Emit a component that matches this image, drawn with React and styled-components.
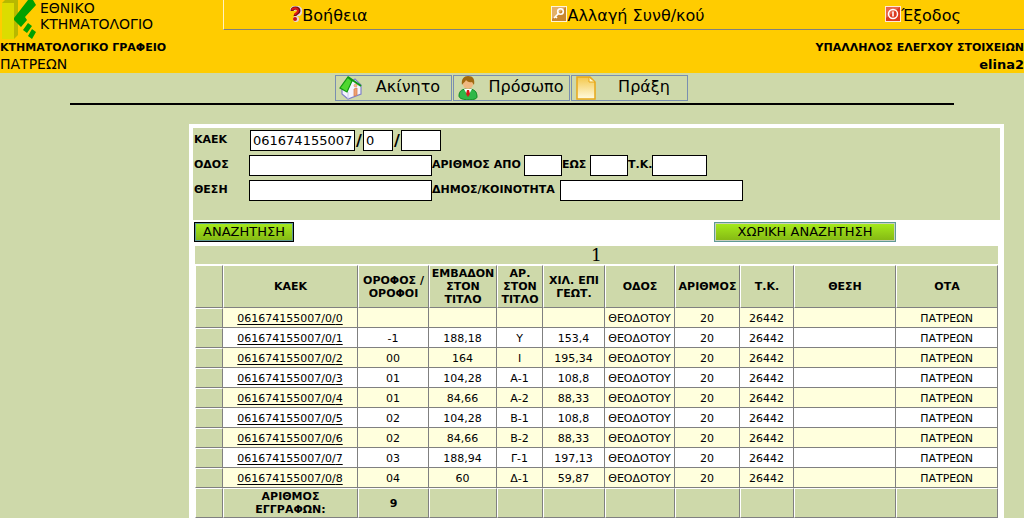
import React, { useState } from 'react'
import styled, { createGlobalStyle, css } from 'styled-components'

const GlobalStyle = createGlobalStyle`
  * {
    box-sizing: border-box;
  }
  html {
    height: 100%;
    overflow: hidden;
  }
  body {
    margin: 0;
    background-color: #ced9aa;
    color: black;
    font-family: 'DejaVu Sans', Verdana, sans-serif;
    font-size: 11px;
  }
`

const Header = styled.header`
  display: flex;
  height: 73px;
  background-color: #ffcc00;
  overflow: hidden;
`

const Brand = styled.div`
  width: 223px;
  flex-shrink: 0;
  white-space: nowrap;
`

const BrandTop = styled.div`
  display: flex;
  gap: 4px;
  height: 40px;
  font-size: 14px;
  line-height: 16px;
`

const Office = styled.div`
  font-size: 11px;
  font-weight: bold;
  line-height: 16px;
`

const City = styled.div`
  font-size: 14px;
  line-height: 17px;
`

const UserName = styled.div`
  font-size: 13px;
  font-weight: bold;
  line-height: 17px;
`

const HeaderMain = styled.div`
  flex: 1;
  display: flex;
  flex-direction: column;
`

const Nav = styled.nav`
  display: grid;
  grid-template-columns: 210fr 388fr 202fr;
  height: 30px;
  border-left: 1px solid #fff2c0;
  border-bottom: 1px solid #808080;
`

const NavLink = styled.a`
  display: flex;
  align-items: center;
  justify-content: center;
  height: 30px;
  color: black;
  font-size: 16px;
  text-decoration: none;
  white-space: nowrap;

  svg {
    margin-bottom: 3px;
  }
`

const UserInfo = styled.div`
  padding-top: 10px;
  text-align: right;
`

const Tabs = styled.nav`
  display: flex;
  justify-content: center;
  gap: 1px;
  padding: 2px 1px 2px 0;
`

const Tab = styled.a`
  display: flex;
  align-items: center;
  width: 117px;
  height: 26px;
  padding-left: 3px;
  border: 1px solid #7a8fb0;
  color: black;
  font-size: 16px;
  line-height: 20px;
  text-decoration: none;
`

const TabText = styled.span`
  flex: 1;
  padding: 0 0 2px 2px;
  text-align: center;
  white-space: nowrap;
`

const Rule = styled.hr`
  height: 2px;
  margin: 0 70px;
  border: none;
  background-color: black;
`

const Panel = styled.main`
  margin: 19px 20px 0 189px;
  border: 4px solid white;
  background-color: white;
`

const SearchForm = styled.form`
  margin: 0;
`

const Fields = styled.div`
  display: flex;
  flex-direction: column;
  gap: 4px;
  height: 92px;
  padding: 2px 1px;
  background-color: #ced9aa;
`

const FieldRow = styled.div`
  display: flex;
  align-items: center;
  height: 21px;
  font-weight: bold;
  white-space: nowrap;
`

const Label = styled.label`
  width: ${(props) => props.$width}px;
  flex-shrink: 0;
  padding-bottom: 2px;
`

const Slash = styled.span`
  width: 8px;
  font-size: 16px;
  text-align: center;
`

const Input = styled.input`
  width: ${(props) => props.$width}px;
  height: 21px;
  padding: 0 2px;
  border: 1px solid black;
  border-radius: 0;
  background-color: white;
  font-family: inherit;
  font-size: 13px;
`

const Actions = styled.div`
  display: flex;
  justify-content: space-between;
  height: 26px;
  padding: 2px 104px 4px 1px;
`

const Button = styled.button`
  width: ${(props) => props.$width}px;
  height: 20px;
  padding: 0;
  border: 1px solid #5f9a94;
  background: linear-gradient(#a6ec1c, #84b714);
  box-shadow: inset 0 0 0 1px #c8d0c0;
  color: black;
  font-family: inherit;
  font-size: 13px;
  line-height: 18px;
  cursor: pointer;
  ${(props) =>
    props.$primary &&
    css`
      border-color: black;
      box-shadow: inset 0 0 0 1px #5f9a94;
    `}
`

const Results = styled.div`
  padding: 0 2px;
`

const Pager = styled.div`
  height: 18px;
  margin-bottom: 1px;
  background-color: #ced9aa;
  font-family: 'DejaVu Serif', serif;
  font-size: 17px;
  line-height: 19px;
  text-align: center;
`

const Table = styled.table`
  width: 100%;
  table-layout: fixed;
  border-collapse: separate;
  border-spacing: 0;
  font-size: 11px;
  text-align: center;
`

const Col = styled.col`
  width: ${(props) => props.$width}px;
`

const HeadCell = styled.th`
  height: ${(props) => props.$height}px;
  padding: 0;
  border: 1px solid white;
  border-right-color: #808080;
  border-bottom-color: #808080;
  background-color: #ced9aa;
  line-height: 13px;
  white-space: pre-line;
`

const Row = styled.tr`
  background-color: ${(props) => (props.$odd ? 'white' : '#ffffdd')};
`

const Cell = styled.td`
  height: 20px;
  padding: 2px 0 0;
  border-right: 1px solid #808080;
  border-bottom: 1px solid #808080;
  line-height: 17px;
  white-space: nowrap;
`

const Link = styled.a`
  color: black;
  text-decoration: underline;
  text-underline-offset: 2px;
`

const Logo = () => (
  <svg width="36" height="40" viewBox="0 0 36 40">
    <path d="M2 3 L5 0 H18 V35 L14 39 H2Z" fill="#b8b800" />
    <rect x="2" y="3" width="12" height="36" fill="#dcdc00" />
    <path d="M28 0 H33 L36 5 L25 17 L27 20 L21 27 L14 20 V18Z" fill="#00a000" />
    <path d="M28 23 L32 26 L27 33 L23 30Z M32 29 L36 32 L32 39 L28 36Z" fill="#00a000" />
  </svg>
)

const HelpIcon = () => (
  <svg width="12" height="16" viewBox="0 0 12 16">
    <path d="M2 5 C2 1 10 1 10 5 C10 8 7 8 7 10" fill="none" stroke="#e8d8d8" strokeWidth="5" />
    <path d="M2 5 C2 1 9 1 9 5 C9 8 5 7 5 10" fill="none" stroke="#6b1010" strokeWidth="3" />
    <path d="M2 4 C3 1 8 2 8 5 C8 7 5 7 5 9" fill="none" stroke="#e01818" strokeWidth="2" />
    <circle cx="6" cy="13" r="3" fill="#e8d8d8" />
    <circle cx="5" cy="13" r="2" fill="#c81414" />
  </svg>
)

const KeyIcon = () => (
  <svg width="16" height="16" viewBox="0 0 16 16">
    <rect width="16" height="16" fill="#fff4d8" />
    <rect x="1" y="1" width="14" height="14" fill="#c9872f" />
    <path d="M1 1 H15 L1 13Z" fill="#e3b069" />
    <circle cx="9.5" cy="5.5" r="2.8" fill="none" stroke="white" strokeWidth="1.6" />
    <path d="M7.5 7.5 L3 12 M4.5 10.5 L6 12" fill="none" stroke="white" strokeWidth="1.6" />
  </svg>
)

const ExitIcon = () => (
  <svg width="16" height="16" viewBox="0 0 16 16">
    <rect width="16" height="16" fill="#ffe8d8" />
    <rect x="1" y="1" width="14" height="14" fill="#dc3c20" />
    <path d="M1 1 H15 L1 12Z" fill="#e8684c" />
    <circle cx="8" cy="8" r="4.5" fill="none" stroke="white" strokeWidth="1.5" />
    <path d="M8 5.5 V10.5" stroke="white" strokeWidth="1.6" />
  </svg>
)

const HouseIcon = () => (
  <svg width="24" height="24" viewBox="0 0 24 24">
    <path d="M3 12 L16 3 L22 9 V18 L9 23 L3 18Z" fill="#f4f4ff" stroke="#8080c8" strokeWidth="1.2" />
    <path d="M9 16 V23" stroke="#c8c8e8" />
    <path d="M15 13 L18 12 V19 L15 20Z" fill="#f0a070" stroke="#d88050" strokeWidth="0.8" />
    <circle cx="16.5" cy="9.5" r="1.5" fill="#f8b890" stroke="#e09060" strokeWidth="0.6" />
    <path d="M9 1 L13 5 L8 16 L1 12Z" fill="#50d830" stroke="#109810" strokeWidth="1.2" />
    <path d="M9 1 L22 10" fill="none" stroke="#109810" strokeWidth="2" />
  </svg>
)

const PersonIcon = () => (
  <svg width="24" height="24" viewBox="0 0 24 24">
    <path d="M2 20 C2 14 6 13 11 13 C17 13 20 15 20 21 C20 25 2 25 2 20Z" fill="#30b848" stroke="#108820" />
    <path d="M7 13 L11 20 L15 13Z" fill="white" />
    <path d="M10 14 H12 L13 18 L11 21 L9 18Z" fill="#d81818" />
    <circle cx="11" cy="8" r="5" fill="#f0b880" />
    <path d="M5 9 C4 3 7 0 11 0 C16 0 18 3 17 9 L15 6 C12 7 10 5 9 4 C8 6 7 6 5 9Z" fill="#a06810" />
  </svg>
)

const PageIcon = () => (
  <svg width="24" height="24" viewBox="0 0 24 24">
    <defs>
      <linearGradient id="paper" x1="0" y1="0" x2="0" y2="1">
        <stop offset="0" stopColor="#f4c84c" />
        <stop offset="1" stopColor="#fffbe0" />
      </linearGradient>
    </defs>
    <path d="M2 1 H15 L20 6 V23 H2Z" fill="url(#paper)" stroke="#e8a818" strokeWidth="1.5" />
    <path d="M14 1 V6 H20Z" fill="#fff8d0" stroke="#e8a818" />
  </svg>
)

const columns = [
  { title: '', width: 28 },
  { title: 'ΚΑΕΚ', width: 135 },
  { title: 'ΟΡΟΦΟΣ /\nΟΡΟΦΟΙ', width: 71 },
  { title: 'ΕΜΒΑΔΟΝ\nΣΤΟΝ\nΤΙΤΛΟ', width: 68 },
  { title: 'ΑΡ.\nΣΤΟΝ\nΤΙΤΛΟ', width: 46 },
  { title: 'ΧΙΛ. ΕΠΙ\nΓΕΩΤ.', width: 62 },
  { title: 'ΟΔΟΣ', width: 70 },
  { title: 'ΑΡΙΘΜΟΣ', width: 65 },
  { title: 'Τ.Κ.', width: 54 },
  { title: 'ΘΕΣΗ', width: 102 },
  { title: 'ΟΤΑ', width: 102 },
]

const rows = [
  ['', '', '', ''],
  ['-1', '188,18', 'Υ', '153,4'],
  ['00', '164', 'Ι', '195,34'],
  ['01', '104,28', 'Α-1', '108,8'],
  ['01', '84,66', 'Α-2', '88,33'],
  ['02', '104,28', 'Β-1', '108,8'],
  ['02', '84,66', 'Β-2', '88,33'],
  ['03', '188,94', 'Γ-1', '197,13'],
  ['04', '60', 'Δ-1', '59,87'],
]

const App = () => {
  const [search, setSearch] = useState({
    kaek: '061674155007',
    kaek2: '0',
    kaek3: '',
    street: '',
    from: '',
    to: '',
    zip: '',
    place: '',
    town: '',
  })

  const handleChange = (event) => {
    setSearch({ ...search, [event.target.id]: event.target.value })
  }

  const field = (id, width, label) => (
    <Input
      id={id}
      name={id}
      aria-label={label}
      $width={width}
      value={search[id]}
      onChange={handleChange}
    />
  )

  return (
    <>
      <GlobalStyle />
      <Header>
        <Brand>
          <BrandTop>
            <Logo />
            <div>
              ΕΘΝΙΚΟ
              <br />
              ΚΤΗΜΑΤΟΛΟΓΙΟ
            </div>
          </BrandTop>
          <Office>ΚΤΗΜΑΤΟΛΟΓΙΚΟ ΓΡΑΦΕΙΟ</Office>
          <City>ΠΑΤΡΕΩΝ</City>
        </Brand>
        <HeaderMain>
          <Nav>
            <NavLink href="#help">
              <HelpIcon />
              Βοήθεια
            </NavLink>
            <NavLink href="#password">
              <KeyIcon />
              Αλλαγή Συνθ/κού
            </NavLink>
            <NavLink href="#exit">
              <ExitIcon />
              Έξοδος
            </NavLink>
          </Nav>
          <UserInfo>
            <Office>ΥΠΑΛΛΗΛΟΣ ΕΛΕΓΧΟΥ ΣΤΟΙΧΕΙΩΝ</Office>
            <UserName>elina2</UserName>
          </UserInfo>
        </HeaderMain>
      </Header>
      <Tabs>
        <Tab href="#property">
          <HouseIcon />
          <TabText>Ακίνητο</TabText>
        </Tab>
        <Tab href="#person">
          <PersonIcon />
          <TabText>Πρόσωπο</TabText>
        </Tab>
        <Tab href="#deed">
          <PageIcon />
          <TabText>Πράξη</TabText>
        </Tab>
      </Tabs>
      <Rule />
      <Panel>
        <SearchForm onSubmit={(event) => event.preventDefault()}>
          <Fields>
            <FieldRow>
              <Label htmlFor="kaek" $width={56}>ΚΑΕΚ</Label>
              {field('kaek', 105)}
              <Slash>/</Slash>
              {field('kaek2', 30, 'ΚΑΕΚ 2')}
              <Slash>/</Slash>
              {field('kaek3', 40, 'ΚΑΕΚ 3')}
            </FieldRow>
            <FieldRow>
              <Label htmlFor="street" $width={55}>ΟΔΟΣ</Label>
              {field('street', 183)}
              <Label htmlFor="from" $width={92}>ΑΡΙΘΜΟΣ ΑΠΟ</Label>
              {field('from', 38)}
              <Label htmlFor="to" $width={28}>ΕΩΣ</Label>
              {field('to', 38)}
              <Label htmlFor="zip" $width={24}>Τ.Κ.</Label>
              {field('zip', 55)}
            </FieldRow>
            <FieldRow>
              <Label htmlFor="place" $width={55}>ΘΕΣΗ</Label>
              {field('place', 183)}
              <Label htmlFor="town" $width={128}>ΔΗΜΟΣ/ΚΟΙΝΟΤΗΤΑ</Label>
              {field('town', 183)}
            </FieldRow>
          </Fields>
          <Actions>
            <Button type="submit" $width={100} $primary>ΑΝΑΖΗΤΗΣΗ</Button>
            <Button type="button" $width={182}>ΧΩΡΙΚΗ ΑΝΑΖΗΤΗΣΗ</Button>
          </Actions>
        </SearchForm>
        <Results>
          <Pager>1</Pager>
          <Table>
            <colgroup>
              {columns.map((column, i) => (
                <Col key={i} $width={column.width} />
              ))}
            </colgroup>
            <thead>
              <tr>
                {columns.map((column, i) => (
                  <HeadCell key={i} $height={43}>{column.title}</HeadCell>
                ))}
              </tr>
            </thead>
            <tbody>
              {rows.map((row, i) => (
                <Row key={i} $odd={i % 2 === 1}>
                  <HeadCell $height={20} />
                  <Cell>
                    <Link href={`#kaek-${i}`}>061674155007/0/{i}</Link>
                  </Cell>
                  {row.map((value, j) => (
                    <Cell key={j}>{value}</Cell>
                  ))}
                  <Cell>ΘΕΟΔΟΤΟΥ</Cell>
                  <Cell>20</Cell>
                  <Cell>26442</Cell>
                  <Cell />
                  <Cell>ΠΑΤΡΕΩΝ</Cell>
                </Row>
              ))}
            </tbody>
            <tfoot>
              <tr>
                {columns.map((column, i) => (
                  <HeadCell key={i} $height={30}>
                    {i === 1 && 'ΑΡΙΘΜΟΣ\nΕΓΓΡΑΦΩΝ:'}
                    {i === 2 && rows.length}
                  </HeadCell>
                ))}
              </tr>
            </tfoot>
          </Table>
        </Results>
      </Panel>
    </>
  )
}

export default App
